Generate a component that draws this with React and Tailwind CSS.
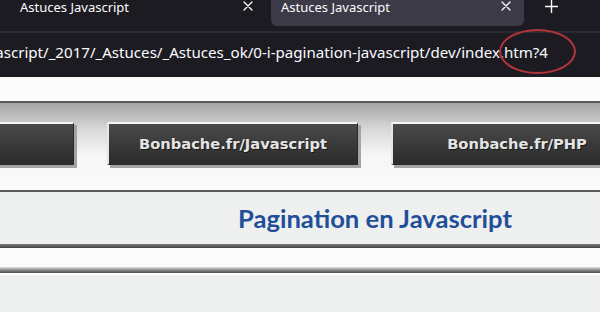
import React from "react";

function Cross({ className }) {
  return (
    <svg className={className} width="10" height="10" viewBox="0 0 10 10" fill="none">
      <path d="M1 1L9 9M9 1L1 9" stroke="#fbfbfe" strokeWidth="1.3" strokeLinecap="round" />
    </svg>
  );
}

function NavButton({ label }) {
  return (
    <div className="w-[251px] h-[43px] shrink-0 flex items-center justify-center border-t-2 border-l-2 border-r border-b border-t-[#f4f4f4] border-l-[#e6e6e6] border-r-[#2a2a2a] border-b-[#2a2a2a] bg-[linear-gradient(to_bottom,#4b4b4b,#3a3a3a_50%,#2b2b2b)] shadow-[3px_3px_0_#a3a3a3]">
      {label && (
        <span className="font-['DejaVu_Sans',sans-serif] font-bold text-[14.7px] text-[#e4e4e4] [text-shadow:1px_1px_0_#1a1a1a] whitespace-nowrap">
          {label}
        </span>
      )}
    </div>
  );
}

export default function App() {
  return (
    <div className="relative w-[600px] h-[312px] overflow-hidden flex flex-col bg-[#eef0ef]">
      {/* tab strip */}
      <div className="h-[31px] shrink-0 flex bg-[#1c1b22] font-['Noto_Sans',sans-serif] text-[13px] leading-[15px] text-[#fbfbfe]">
        <div className="w-[271px] flex items-start justify-between pl-[20px] pr-[18px]">
          <span className="whitespace-nowrap">Astuces Javascript</span>
          <Cross className="mt-[1px]" />
        </div>
        <div className="w-[253px] h-[26px] flex items-start justify-between pl-[10px] pr-[13px] bg-[#3b3a46] rounded-b-[6px]">
          <span className="whitespace-nowrap">Astuces Javascript</span>
          <Cross className="mt-[1px]" />
        </div>
        <div className="pl-[21px]">
          <svg width="13" height="13" viewBox="0 0 13 13" fill="none">
            <path d="M6.5 0V13M0 6.5H13" stroke="#fbfbfe" strokeWidth="1.4" />
          </svg>
        </div>
      </div>
      <div className="h-[2px] shrink-0 bg-[#2b2a33]" />
      {/* address bar */}
      <div className="h-[44px] shrink-0 flex items-center justify-end overflow-hidden bg-[#1c1b22] pr-[52px] pb-[6px]">
        <span className="whitespace-nowrap font-['Noto_Sans',sans-serif] text-[15.1px] text-[#fbfbfe]">
          ascript/_2017/_Astuces/_Astuces_ok/0-i-pagination-javascript/dev/index.htm?4
        </span>
      </div>
      {/* page */}
      <div className="h-[24px] shrink-0 bg-[#fcfcfc]" />
      <div className="h-[91px] shrink-0 border-y-2 border-[#5b5b5b] bg-[linear-gradient(to_bottom,#a4a4a4,#d8d8d8_30%,#f6f6f6_60%,#fbfbfb)] pt-[19px] overflow-hidden">
        <div className="flex gap-[33px] ml-[-177px]">
          <NavButton label="" />
          <NavButton label="Bonbache.fr/Javascript" />
          <NavButton label="Bonbache.fr/PHP" />
        </div>
      </div>
      <div className="h-[52px] shrink-0 flex items-center justify-center pl-[150px] bg-[#eef0ef]">
        <h1 className="font-['Lato',sans-serif] font-bold text-[25.6px] text-[#1f4f98] whitespace-nowrap">
          Pagination en Javascript
        </h1>
      </div>
      <div className="h-[4px] shrink-0 bg-[linear-gradient(to_bottom,#7a7a7a,#444)]" />
      <div className="h-[19px] shrink-0 bg-[#fbfbfb]" />
      <div className="h-[6px] shrink-0 bg-[linear-gradient(to_bottom,#e2e2e2,#8a8a8a,#4d4d4d)]" />
      <div className="h-[2px] shrink-0 bg-white" />
      <div className="flex-1 bg-[#eef0ef]" />

      {/* red annotation ellipse */}
      <div className="absolute left-[499px] top-[29px] w-[77px] h-[45px] rounded-[50%] border-2 border-[#b3353a]" />
    </div>
  );
}
